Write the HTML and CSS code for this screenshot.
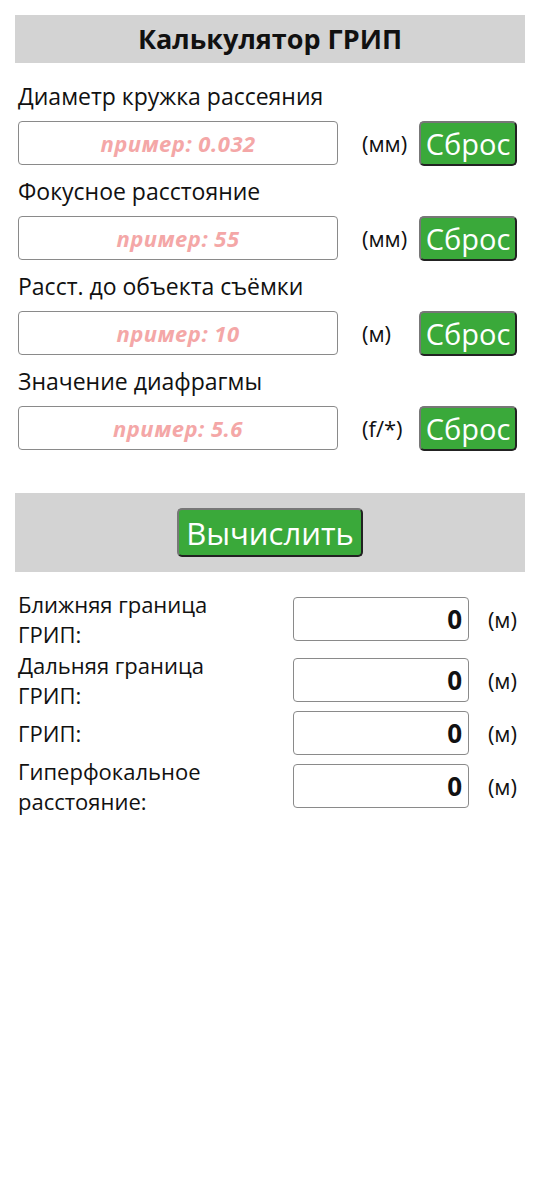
FILE: index.html
```html
<!DOCTYPE html>
<html lang="ru">
<head>
  <meta charset="UTF-8" />
  <meta name="viewport" content="width=device-width, initial-scale=1.0" />
  <title>Калькулятор ГРИП</title>
  <link rel="stylesheet" href="styles.css">
</head>
<body>
  <div class="container">
    <h1 class="title">Калькулятор ГРИП</h1>

    <div class="inputs">
      <div class="field">
        <label class="label" for="coc">Диаметр кружка рассеяния</label>
        <div class="row">
          <input class="entry" id="coc" type="text" placeholder="пример: 0.032" />
          <span class="unit">(мм)</span>
          <button class="btn reset" type="button">Сброс</button>
        </div>
      </div>
      <div class="field">
        <label class="label" for="focal">Фокусное расстояние</label>
        <div class="row">
          <input class="entry" id="focal" type="text" placeholder="пример: 55" />
          <span class="unit">(мм)</span>
          <button class="btn reset" type="button">Сброс</button>
        </div>
      </div>
      <div class="field">
        <label class="label" for="dist">Расст. до объекта съёмки</label>
        <div class="row">
          <input class="entry" id="dist" type="text" placeholder="пример: 10" />
          <span class="unit">(м)</span>
          <button class="btn reset" type="button">Сброс</button>
        </div>
      </div>
      <div class="field">
        <label class="label" for="aperture">Значение диафрагмы</label>
        <div class="row">
          <input class="entry" id="aperture" type="text" placeholder="пример: 5.6" />
          <span class="unit">(f/*)</span>
          <button class="btn reset" type="button">Сброс</button>
        </div>
      </div>
    </div>

    <div class="calc-bar">
      <button class="btn calc" type="button">Вычислить</button>
    </div>

    <div class="results">
      <div class="res-label">Ближняя граница<br>ГРИП:</div>
      <div class="res-value">0</div>
      <div class="res-unit">(м)</div>

      <div class="res-label">Дальняя граница<br>ГРИП:</div>
      <div class="res-value">0</div>
      <div class="res-unit">(м)</div>

      <div class="res-label">ГРИП:</div>
      <div class="res-value">0</div>
      <div class="res-unit">(м)</div>

      <div class="res-label">Гиперфокальное<br>расстояние:</div>
      <div class="res-value">0</div>
      <div class="res-unit">(м)</div>
    </div>
  </div>
</body>
</html>
```

FILE: styles.css
```css
body {
  margin: 0;
  padding: 0;
  background: #fff;
  font-family: "Open Sans", "Noto Sans", sans-serif;
  color: #111;
}
.container {
  padding: 15px;
}
.title {
  margin: 0;
  height: 48px;
  line-height: 48px;
  background: #d3d3d3;
  text-align: center;
  font-size: 27px;
  font-weight: bold;
}
.inputs {
  padding: 17px 3px 0;
}
.field {
  margin-bottom: 10px;
}
.label {
  display: block;
  font-size: 23px;
  line-height: 32px;
  margin-bottom: 9px;
}
.row {
  display: flex;
  align-items: center;
  height: 44px;
}
.entry {
  box-sizing: border-box;
  width: 320px;
  height: 44px;
  margin: 0;
  border: 1px solid #8a8a8a;
  border-radius: 4px;
  font-family: inherit;
  font-size: 22px;
  text-align: center;
}
.entry::placeholder {
  color: #f4a7a7;
  font-style: italic;
  font-weight: bold;
  letter-spacing: 0.5px;
}
.unit {
  width: 57px;
  margin-left: 24px;
  font-size: 22px;
}
.btn {
  box-sizing: border-box;
  background: #3aa93a;
  color: #fff;
  font-family: inherit;
  border-width: 2px;
  border-style: solid;
  border-color: #777 #222 #222 #777;
  border-radius: 5px;
  padding: 0;
  cursor: pointer;
}
.reset {
  width: 98px;
  height: 45px;
  font-size: 29px;
  line-height: 1;
}
.calc-bar {
  margin-top: 43px;
  background: #d3d3d3;
  height: 79px;
  display: flex;
  align-items: center;
  justify-content: center;
}
.calc {
  width: 186px;
  height: 49px;
  font-size: 31px;
}
.results {
  display: grid;
  grid-template-columns: 1fr 176px 53px;
  align-items: center;
  row-gap: 1px;
  padding: 17px 3px 0;
}
.res-label {
  font-size: 22px;
  line-height: 30px;
}
.res-value {
  box-sizing: border-box;
  height: 44px;
  line-height: 42px;
  border: 1px solid #8a8a8a;
  border-radius: 4px;
  text-align: right;
  padding-right: 6px;
  font-size: 26px;
  font-weight: bold;
}
.res-unit {
  text-align: right;
  font-size: 22px;
  padding-right: 5px;
}
```
